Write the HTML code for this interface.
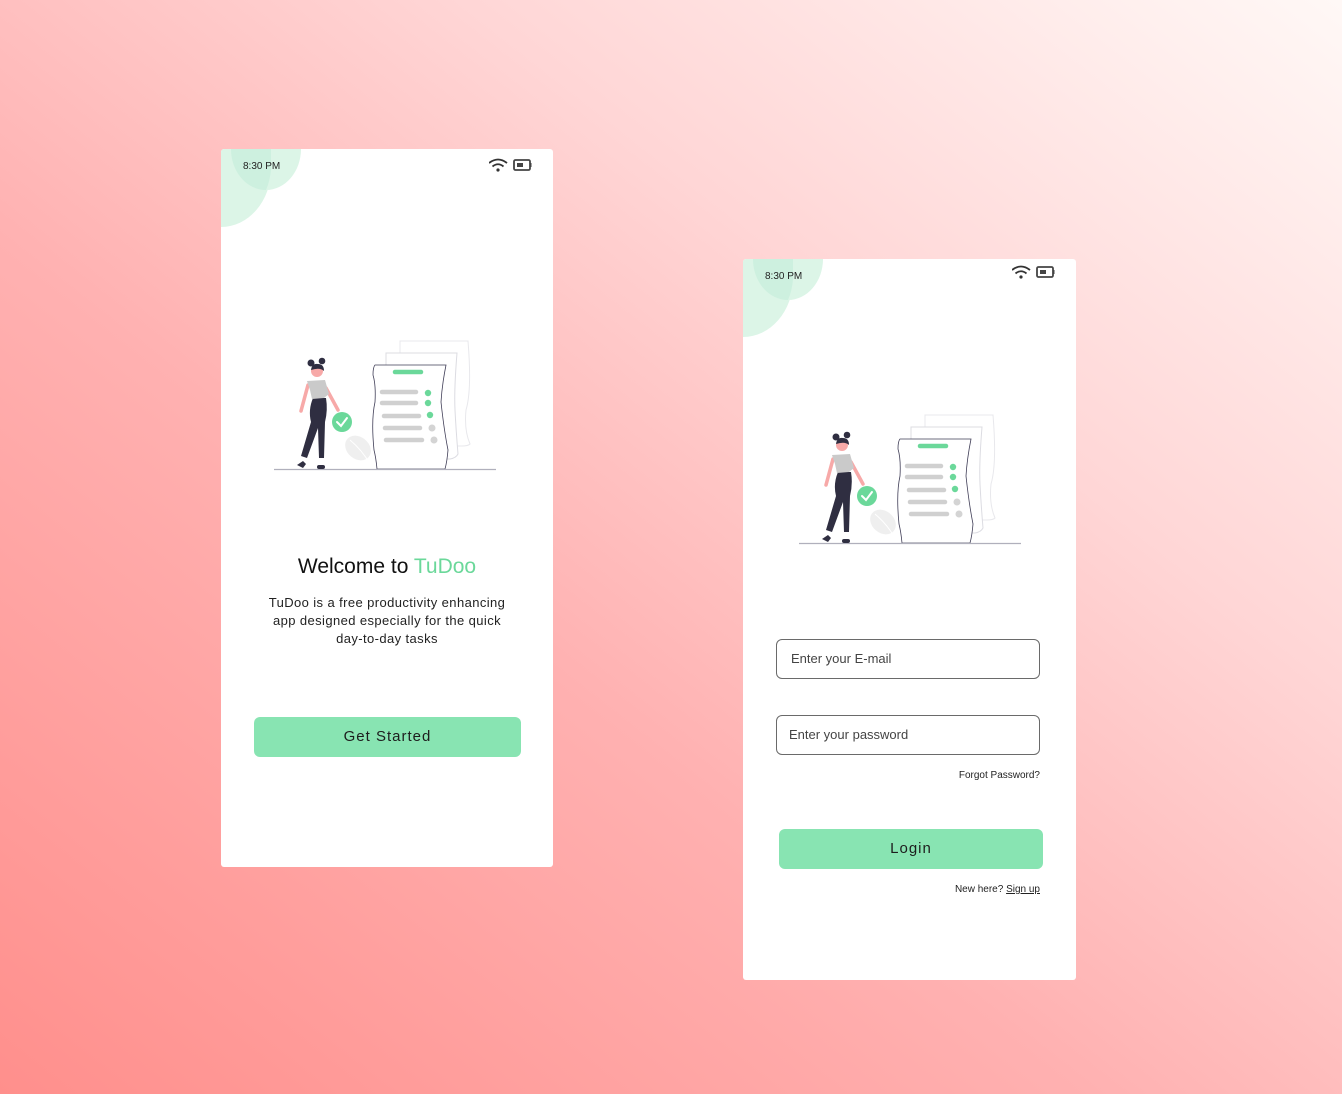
<!DOCTYPE html>
<html><head><meta charset="utf-8"><style>
*{margin:0;padding:0;box-sizing:border-box}
body{width:1342px;height:1094px;overflow:hidden;position:relative;font-family:"Liberation Sans",sans-serif;
background:linear-gradient(38deg,#ff8f8c 0%,#ffb1b1 40%,#ffd6d6 68%,#fff8f6 100%);}
.card{position:absolute;background:#fff;border-radius:3px;overflow:hidden}
.abs{position:absolute}
.time{position:absolute;font-size:10px;color:#222}
.btn{position:absolute;background:#88e4b2;border-radius:6px;text-align:center;color:#1d1d1d;font-size:15px;letter-spacing:1px}
.inp{position:absolute;border:1px solid #6a6a6a;border-radius:6px;font-size:13px;color:#444}
</style></head><body>

<svg width="0" height="0" style="position:absolute">
<defs>
<g id="ill">
 <path d="M126 1 H194 Q198 50 192 70 Q190 90 196 104 Q194 106 188 106 H126 Z" fill="#fff" stroke="#e8e8ec" stroke-width="1"/>
 <path d="M112 13 H183 Q180 50 181 70 Q182 90 184 114 Q182 118 176 119 H112 Z" fill="#fff" stroke="#dcdce2" stroke-width="1"/>
 <ellipse cx="84" cy="108" rx="14" ry="11" transform="rotate(40 84 108)" fill="#efefef"/>
 <path d="M76 100 Q88 110 96 124" stroke="#fff" stroke-width="1" fill="none"/>
 <path d="M101 25 H172 Q168 45 167 62 Q170 90 174 110 Q173 122 171 129 H103 Q102 118 100 110 Q97 80 101 62 Q102 45 99 35 Q99 27 101 25 Z" fill="#fff" stroke="#3f3d56" stroke-width="0.8"/>
 <line x1="121" y1="32" x2="147" y2="32" stroke="#6bd89a" stroke-width="4.5" stroke-linecap="round"/>
 <g stroke="#d0d0d0" stroke-width="4.5" stroke-linecap="round">
  <line x1="108" y1="52" x2="142" y2="52"/><line x1="108" y1="63" x2="142" y2="63"/>
  <line x1="110" y1="76" x2="145" y2="76"/><line x1="111" y1="88" x2="146" y2="88"/><line x1="112" y1="100" x2="148" y2="100"/>
 </g>
 <circle cx="154" cy="53" r="3.2" fill="#6bd89a"/><circle cx="154" cy="63" r="3.2" fill="#6bd89a"/><circle cx="156" cy="75" r="3.2" fill="#6bd89a"/>
 <circle cx="158" cy="88" r="3.5" fill="#d4d4d4"/><circle cx="160" cy="100" r="3.5" fill="#d4d4d4"/>
 <line x1="0" y1="129.5" x2="222" y2="129.5" stroke="#b0b0bc" stroke-width="1.2"/>
 <path d="M34 45 L27 71" stroke="#f7a9a8" stroke-width="3.5" stroke-linecap="round"/>
 <path d="M52 48 L64 70" stroke="#f7a9a8" stroke-width="3.5" stroke-linecap="round"/>
 <circle cx="68" cy="82" r="10" fill="#6bd89a"/>
 <path d="M63 82 L67 86 L73 78" stroke="#fff" stroke-width="2" fill="none" stroke-linecap="round"/>
 <path d="M39 58 Q34 70 37 82 L27 116 L33 118 L44 88 L45 118 L50 118 L51 82 Q54 70 52 58 Z" fill="#2f2e41"/>
 <path d="M33 41 L51 40 L55 54 L50 58 L38 59 L36 50 Z" fill="#cacaca"/>
 <circle cx="43" cy="31" r="6" fill="#f7a9a8"/>
 <path d="M37 30 Q38 23 44 24 Q50 24 50 31 Q46 27 37 30 Z" fill="#2f2e41"/>
 <circle cx="37" cy="23" r="3.5" fill="#2f2e41"/><circle cx="48" cy="21" r="3.3" fill="#2f2e41"/>
 <path d="M23 125 L29 121 L32 124 L29 128 Z" fill="#2f2e41"/>
 <rect x="43" y="125" width="8" height="4" rx="2" fill="#2f2e41"/>
</g>
<g id="stat">
 <path d="M-9 -4 Q0 -11 9 -4" stroke="#333" stroke-width="1.8" fill="none"/>
 <path d="M-5.5 -0.5 Q0 -5 5.5 -0.5" stroke="#333" stroke-width="1.8" fill="none"/>
 <circle cx="0" cy="3" r="1.6" fill="#333"/>
 <rect x="16" y="-7" width="16" height="10" rx="1.5" fill="none" stroke="#444" stroke-width="1.8"/>
 <rect x="19" y="-4" width="6" height="4" fill="#444"/>
 <rect x="32" y="-4" width="1.5" height="4" fill="#444"/>
</g>
</defs></svg>

<div class="card" style="left:221px;top:149px;width:332px;height:718px">
 <svg class="abs" style="left:0;top:0" width="120" height="100">
  <ellipse cx="0" cy="20" rx="50" ry="58" fill="#dcf5e7"/>
  <ellipse cx="45" cy="0" rx="35" ry="41" fill="#dcf5e7"/>
  <path d="M10 0 A35 41 0 0 0 45 41 A50 58 0 0 0 50 20 L50 0 Z" fill="#c6eedb" opacity="0.7"/>
 </svg>
 <div class="time" style="left:22px;top:12px">8:30 PM</div>
 <svg class="abs" style="left:268px;top:6px" width="60" height="20"><use href="#stat" transform="translate(9,12)"/></svg>
 <svg class="abs" style="left:53px;top:191px" width="222" height="131"><use href="#ill"/></svg>
 <div class="abs" style="left:0;width:332px;top:406px;text-align:center;font-size:21px;color:#111">Welcome to <span style="color:#6bd89a">TuDoo</span></div>
 <div class="abs" style="left:0;width:332px;top:445px;text-align:center;font-size:13px;line-height:18px;color:#222;letter-spacing:0.4px">TuDoo is a free productivity enhancing<br>app designed especially for the quick<br>day-to-day tasks</div>
 <div class="btn" style="left:33px;top:568px;width:267px;height:40px;line-height:40px">Get Started</div>
</div>

<div class="card" style="left:743px;top:259px;width:333px;height:721px">
 <svg class="abs" style="left:0;top:0" width="120" height="100">
  <ellipse cx="0" cy="20" rx="50" ry="58" fill="#dcf5e7"/>
  <ellipse cx="45" cy="0" rx="35" ry="41" fill="#dcf5e7"/>
  <path d="M10 0 A35 41 0 0 0 45 41 A50 58 0 0 0 50 20 L50 0 Z" fill="#c6eedb" opacity="0.7"/>
 </svg>
 <div class="time" style="left:22px;top:12px">8:30 PM</div>
 <svg class="abs" style="left:269px;top:3px" width="60" height="20"><use href="#stat" transform="translate(9,12)"/></svg>
 <svg class="abs" style="left:56px;top:155px" width="224" height="133"><use href="#ill"/></svg>
 <div class="inp" style="left:33px;top:380px;width:264px;height:40px;line-height:38px;padding-left:14px">Enter your E-mail</div>
 <div class="inp" style="left:33px;top:456px;width:264px;height:40px;line-height:38px;padding-left:12px">Enter your password</div>
 <div class="abs" style="right:36px;top:511px;font-size:10px;color:#222">Forgot Password?</div>
 <div class="btn" style="left:36px;top:570px;width:264px;height:40px;line-height:40px">Login</div>
 <div class="abs" style="right:36px;top:625px;font-size:10px;color:#222">New here? <span style="text-decoration:underline">Sign up</span></div>
</div>
</body></html>
